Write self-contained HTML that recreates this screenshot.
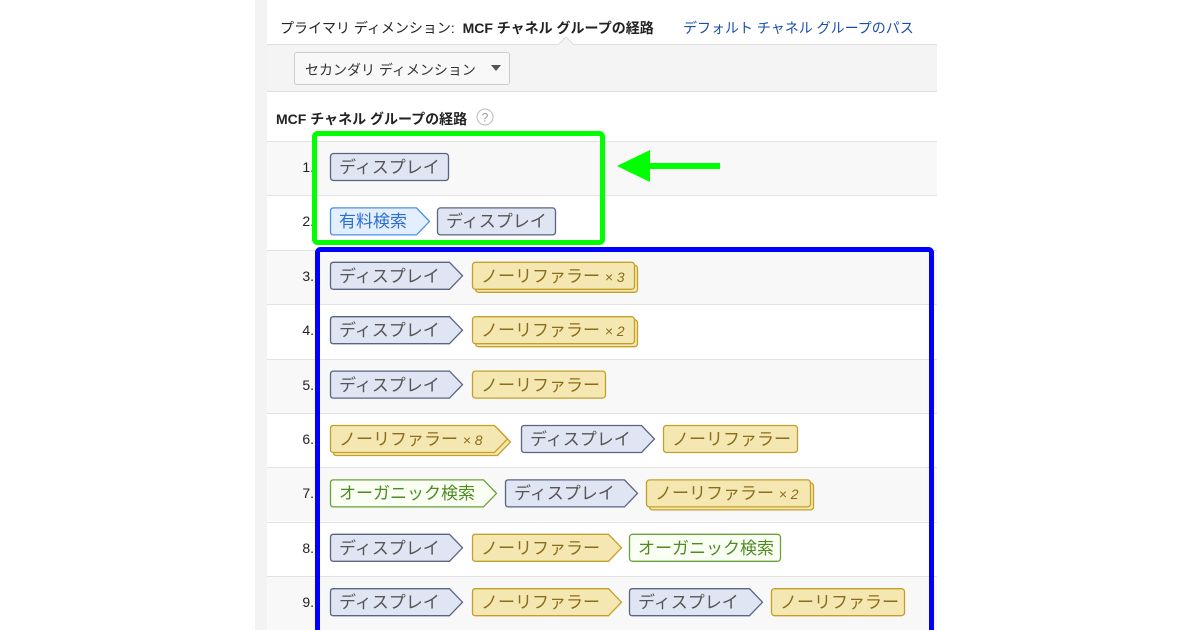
<!DOCTYPE html>
<html><head><meta charset="utf-8"><style>
*{margin:0;padding:0;box-sizing:border-box}
body{width:1200px;height:630px;background:#fff;position:relative;overflow:hidden;font-family:"Liberation Sans","Noto Sans CJK JP",sans-serif}
.abs{position:absolute}
.t{white-space:nowrap}
</style></head><body>
<div class="abs" style="left:255px;top:0;width:12px;height:630px;background:#f3f3f3"></div>
<div class="abs" style="left:267px;top:0;width:670px;height:630px;background:#fff"></div>
<div class="abs t" style="left:280px;top:18px;font-size:14px;color:#222">プライマリ ディメンション:&nbsp; <b>MCF チャネル グループの経路</b></div>
<div class="abs t" style="left:683px;top:18px;font-size:14px;color:#1a4fa8">デフォルト チャネル グループのパス</div>
<div class="abs" style="left:267px;top:44px;width:670px;height:48px;background:#f4f4f4;border-top:1px solid #ddd;border-bottom:1px solid #ddd"></div>
<svg class="abs" style="left:558px;top:36px" width="16" height="10"><path d="M0 9 L8 1 L16 9" fill="#f4f4f4" stroke="#ddd"/></svg>
<div class="abs" style="left:294px;top:52px;width:216px;height:33px;background:#f8f8f8;border:1px solid #ccc;border-radius:3px"></div>
<div class="abs t" style="left:305px;top:60px;font-size:14px;color:#333">セカンダリ ディメンション</div>
<svg class="abs" style="left:490px;top:64px" width="12" height="8"><path d="M1 1 L11 1 L6 7Z" fill="#555"/></svg>
<div class="abs t" style="left:276px;top:109px;font-size:14px;font-weight:bold;color:#222">MCF チャネル グループの経路</div>
<svg class="abs" style="left:476px;top:108px" width="18" height="18"><circle cx="9" cy="9" r="8" fill="#fff" stroke="#bbb"/><text x="9" y="13.5" font-size="12" text-anchor="middle" fill="#999" font-family="Liberation Sans">?</text></svg>
<div id="rows"></div>
<svg class="abs" style="left:0;top:0" width="1200" height="630">
<rect x="314.5" y="133.5" width="288" height="109" rx="3" fill="none" stroke="#00ff00" stroke-width="5"/>
<rect x="317.5" y="249.5" width="614" height="400" rx="3" fill="none" stroke="#0000ff" stroke-width="5"/>
<path d="M617 166 L650 150 L650 163 L720 163 L720 169 L650 169 L650 182Z" fill="#00ff00"/>
</svg>
<script>
const C={d:['#dfe5f2','#5a6482','#555'],p:['#e3efff','#4a90e2','#2b6fd6'],n:['#f5e7b2','#c4a02a','#8a6d1a'],o:['#f9fff2','#6aa13a','#4f8a25']};
const T={d:'ディスプレイ',p:'有料検索',n:'ノーリファラー',o:'オーガニック検索'};
const R=[
[['d',330,449,0]],
[['p',330,430,1],['d',437,556,0]],
[['d',330,463,1],['n',472,635,0,1,3]],
[['d',330,463,1],['n',472,635,0,1,2]],
[['d',330,463,1],['n',472,606,0]],
[['n',330,508,1,1,8],['d',521,655,1],['n',663,798,0]],
[['o',330,497,1],['d',505,638,1],['n',646,811,0,1,2]],
[['d',330,463,1],['n',472,622,1],['o',629,781,0]],
[['d',330,463,1],['n',472,622,1],['d',629,763,1],['n',771,905,0]]
];
let h='';
R.forEach((r,i)=>{
 const top=141+i*54.4;
 h+=`<div class="abs" style="left:267px;top:${top}px;width:670px;height:54px;background:${i%2==0?'#f8f8f8':'#fff'};border-top:1px solid #e2e2e2"></div>`;
 h+=`<div class="abs t" style="left:270px;width:44px;text-align:right;top:${top+18}px;font-size:14px;color:#222">${i+1}.</div>`;
 const cy=top+26;
 r.forEach(c=>{
  const [t,x,rt,ar,st,cnt]=c;const col=C[t];const y=cy-14,hh=28;
  let s='';
  const shape=(ox,oy)=>{
   const x0=x+ox+.5,y0=y+oy+.5,x1=rt+ox-.5,y1=y+hh+oy-.5;
   if(ar){const b=x1-13;return `<path d="M${x0+3} ${y0} L${b} ${y0} L${x1} ${(y0+y1)/2} L${b} ${y1} L${x0+3} ${y1} Q${x0} ${y1} ${x0} ${y1-3} L${x0} ${y0+3} Q${x0} ${y0} ${x0+3} ${y0}Z" fill="${col[0]}" stroke="${col[1]}" stroke-width="1.3"/>`;}
   return `<rect x="${x0}" y="${y0}" width="${x1-x0}" height="${y1-y0}" rx="3" fill="${col[0]}" stroke="${col[1]}" stroke-width="1.3"/>`;
  };
  if(st) s+=shape(3,3);
  s+=shape(0,0);
  h+=`<svg class="abs" style="left:0;top:0" width="1200" height="630">${s}</svg>`;
  h+=`<div class="abs t" style="left:${x+9}px;top:${y+5}px;font-size:17px;line-height:20px;color:${col[2]}">${T[t]}${cnt?` <i style="font-size:14px">× ${cnt}</i>`:''}</div>`;
 });
});
document.getElementById('rows').innerHTML=h;
</script>
</body></html>
